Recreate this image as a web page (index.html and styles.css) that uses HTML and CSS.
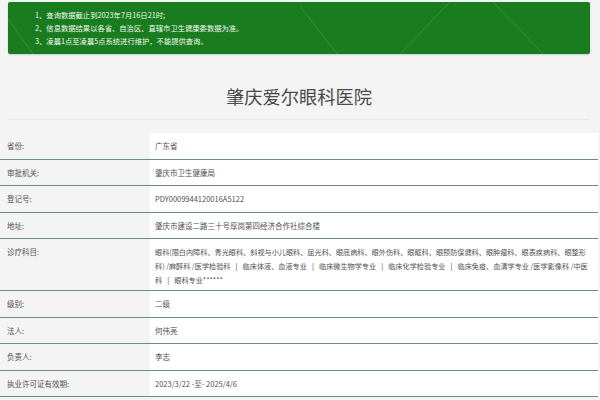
FILE: index.html
```html
<!DOCTYPE html>
<html lang="zh">
<head>
<meta charset="utf-8">
<title>肇庆爱尔眼科医院</title>
<link rel="stylesheet" href="styles.css">
</head>
<body>
<div class="top">
  <div class="notice">
    <p>1、查询数据截止到2023年7月16日21时;</p>
    <p>2、信息数据结果以各省、自治区、直辖市卫生健康委数据为准。</p>
    <p>3、凌晨1点至凌晨5点系统进行维护，不能提供查询。</p>
  </div>
  <h1 class="title">肇庆爱尔眼科医院</h1>
  <div class="rule"></div>
</div>
<div class="table">
  <div class="row"><div class="label">省份:</div><div class="value">广东省</div></div>
  <div class="row"><div class="label">审批机关:</div><div class="value">肇庆市卫生健康局</div></div>
  <div class="row"><div class="label">登记号:</div><div class="value">PDY0009944120016A5122</div></div>
  <div class="row"><div class="label">地址:</div><div class="value">肇庆市建设二路三十号厚岗第四经济合作社综合楼</div></div>
  <div class="row tall"><div class="label">诊疗科目:</div><div class="value">眼科(限白内障科、青光眼科、斜视与小儿眼科、屈光科、眼底病科、眼外伤科、眼眶科、眼预防保健科、眼肿瘤科、眼表疾病科、眼整形科) /麻醉科 /医学检验科 <span class="sep">|</span> 临床体液、血液专业 <span class="sep">|</span> 临床微生物学专业 <span class="sep">|</span> 临床化学检验专业 <span class="sep">|</span> 临床免疫、血清学专业 /医学影像科 /中医科 <span class="sep">|</span> 眼科专业******</div></div>
  <div class="row"><div class="label">级别:</div><div class="value">二级</div></div>
  <div class="row"><div class="label">法人:</div><div class="value">何伟亮</div></div>
  <div class="row"><div class="label">负责人:</div><div class="value">李志</div></div>
  <div class="row"><div class="label">执业许可证有效期:</div><div class="value">2023/3/22 -至- 2025/4/6</div></div>
</div>
</body>
</html>
```
FILE: styles.css
```css
html, body {
  margin: 0;
  padding: 0;
  background: #f4f4f4;
  font-family: "Noto Sans CJK SC", "Noto Sans", sans-serif;
  color: #555;
}
.top {
  padding: 2px 10px 0 8px;
}
.notice {
  background-color: #197d1f;
  background-image: url("data:image/svg+xml;utf8,<svg xmlns='http://www.w3.org/2000/svg' width='582' height='52'><g stroke='rgba(255,255,255,0.13)' stroke-width='1' fill='none'><line x1='292' y1='4' x2='329' y2='52'/><line x1='442' y1='0' x2='392' y2='52'/><line x1='485' y1='0' x2='535' y2='52'/><line x1='-5' y1='10' x2='25' y2='52'/></g></svg>");
  border-radius: 2px;
  box-shadow: 0 1px 2px rgba(0,0,0,0.15);
  height: 52px;
  box-sizing: border-box;
  padding: 7px 0 0 27px;
}
.notice p {
  margin: 0;
  font-size: 7.3px;
  line-height: 13px;
  color: #eef7ee;
}
.title {
  margin: 30px 0 11px;
  text-align: center;
  font-size: 18.25px;
  line-height: 24px;
  font-weight: 400;
  color: #4a4a4a;
}
.rule {
  height: 1px;
  background: #e6e6e6;
  margin-bottom: 13px;
}
.table {
  width: 598px;
}
.row {
  display: grid;
  grid-template-columns: 150px 1fr;
  border-bottom: 1px solid #6f8e82;
  box-shadow: 0 1px 0 #c4d4cc;
  font-size: 7.5px;
  color: #505050;
}
.label {
  padding-left: 7px;
  height: 25.5px;
  line-height: 25.5px;
  background: #f4f4f4;
}
.value {
  background: #fff;
  padding-left: 5px;
  line-height: 25.5px;
}
.tall .label {
  height: auto;
  line-height: 14px;
  padding-top: 6px;
}
.tall .value {
  font-size: 7.15px;
  line-height: 14px;
  padding: 6px 8px 5px 5px;
  height: 40px;
}
.sep {
  margin: 0 3.5px;
  color: #333;
}
```
